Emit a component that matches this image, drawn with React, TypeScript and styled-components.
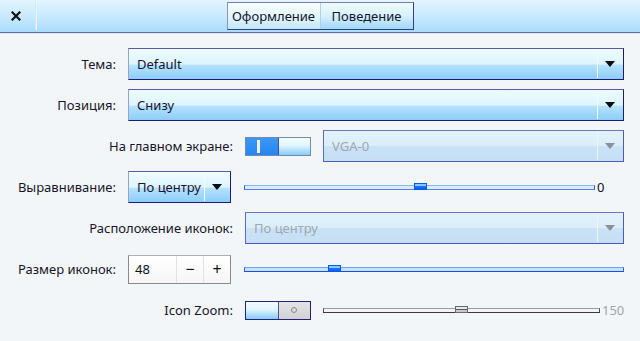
import styled, { createGlobalStyle } from "styled-components";

const GlobalStyle = createGlobalStyle`
  html, body {
    margin: 0;
    padding: 0;
    background: #f3f6f8;
  }
  body {
    font-family: "Noto Sans", "DejaVu Sans", sans-serif;
    font-size: 13px;
    color: #1c1a2e;
  }
`;

const Window = styled.div`
  width: 640px;
  height: 341px;
  display: flex;
  flex-direction: column;
  background: #f3f6f8;
`;

const Header = styled.div`
  height: 32px;
  display: grid;
  grid-template-columns: 1fr auto 1fr;
  align-items: center;
  background: linear-gradient(#e2f5ff, #c6e9ff 55%, #a9dbfb);
  border-bottom: 1px solid #6a6aa8;
  box-shadow: 0 1px 0 #dfe6ee;
`;

const HeaderLeft = styled.div`
  display: flex;
  align-items: center;
  height: 100%;
`;

const CloseButton = styled.div`
  width: 30px;
  display: flex;
  justify-content: center;
  padding-left: 1px;
`;

const HeaderSeparator = styled.div`
  width: 2px;
  height: 28px;
  margin-left: 4px;
  background: linear-gradient(90deg, #c8e2f2, #f4fbff);
`;

const TabBar = styled.div`
  display: flex;
  height: 26px;
  border: 1px solid #3a3a8a;
  border-top-color: #7a7ab0;
  border-left-color: #8a94c0;
`;

const Tab = styled.div<{ $active?: boolean }>`
  width: 92px;
  display: flex;
  align-items: center;
  justify-content: center;
  background: ${(p) =>
    p.$active
      ? "linear-gradient(#f6fdff, #e4f7ff 50%, #c2e6fb)"
      : "linear-gradient(#eefbff, #d6f1ff 50%, #9fd6fa)"};
  color: #14142a;
  & + & {
    border-left: 1px solid #b4cfe2;
  }
`;

const Form = styled.div`
  display: flex;
  flex-direction: column;
  gap: 9px;
  padding: 15px 16px 0 16px;
`;

const Row = styled.div`
  display: flex;
  align-items: center;
  height: 32px;
`;

const Label = styled.div<{ $wide?: boolean }>`
  width: ${(p) => (p.$wide ? "217px" : "100px")};
  margin-right: 12px;
  text-align: right;
  white-space: nowrap;
  color: #17152a;
`;

const Combo = styled.div<{ $disabled?: boolean; $width?: number }>`
  box-sizing: border-box;
  height: 32px;
  ${(p) => (p.$width ? `width: ${p.$width}px;` : "flex: 1;")}
  display: flex;
  align-items: center;
  border: 1px solid ${(p) => (p.$disabled ? "#4a5ac4" : "#1c1c78")};
  border-top-color: ${(p) => (p.$disabled ? "#6a76c8" : "#5a5aa2")};
  border-left-color: ${(p) => (p.$disabled ? "#5a6ac8" : "#9aa2c6")};
  background: ${(p) =>
    p.$disabled
      ? "linear-gradient(#e2f2fa, #daeef9 50%, #c9e2f6 52%, #c6dff5)"
      : "linear-gradient(#eefcff, #dcf5ff 50%, #b4e2ff 55%, #8ccdf8)"};
  color: ${(p) => (p.$disabled ? "#a0a8b0" : "#1a1030")};
  padding-left: 8px;
`;

const ComboText = styled.div`
  flex: 1;
  white-space: nowrap;
  overflow: hidden;
`;

const ComboArrow = styled.div<{ $disabled?: boolean }>`
  width: 24px;
  height: 28px;
  display: flex;
  align-items: center;
  justify-content: center;
  border-left: 1px solid ${(p) => (p.$disabled ? "#eef6fc" : "#f2fbff")};
  margin-right: 1px;
  &::after {
    content: "";
    width: 0;
    height: 0;
    border-left: 5px solid transparent;
    border-right: 5px solid transparent;
    border-top: 6px solid ${(p) => (p.$disabled ? "#8a9098" : "#0c0c14")};
  }
`;

const Toggle = styled.div<{ $on?: boolean }>`
  box-sizing: border-box;
  width: 66px;
  height: 19px;
  display: flex;
  border: 1px solid ${(p) => (p.$on ? "#7888a8" : "#22227a")};
  margin-right: 12px;
`;

const ToggleHalf = styled.div<{ $kind: "on" | "light" | "off" }>`
  flex: 1;
  display: flex;
  align-items: center;
  justify-content: center;
  background: ${(p) =>
    p.$kind === "on"
      ? "linear-gradient(#3c98f8, #2486f0)"
      : p.$kind === "light"
      ? "linear-gradient(#f2fcff, #dff5ff 45%, #86cbf8)"
      : "linear-gradient(#e4e4e6, #d2d2d4)"};
  & + & {
    border-left: 1px solid ${(p) => (p.$kind === "off" ? "#50508a" : "#5a7ab8")};
  }
`;

const ToggleBar = styled.div`
  width: 3px;
  height: 13px;
  background: #f4f0ff;
  margin-right: 6px;
`;

const ToggleCircle = styled.div`
  width: 4px;
  height: 4px;
  border: 1px solid #8a8a8e;
  border-radius: 50%;
`;

const SliderWrap = styled.div<{ $gap?: number }>`
  flex: 1;
  position: relative;
  height: 14px;
  margin-left: ${(p) => p.$gap ?? 0}px;
  display: flex;
  align-items: center;
`;

const Groove = styled.div<{ $tone: "blue" | "dark" | "grey" }>`
  flex: 1;
  box-sizing: border-box;
  height: 5px;
  border-top: 1px solid
    ${(p) => (p.$tone === "grey" ? "#9a9a9a" : p.$tone === "dark" ? "#6aa4f4" : "#8ab6f0")};
  border-bottom: 1px solid
    ${(p) => (p.$tone === "grey" ? "#3a3a3a" : p.$tone === "dark" ? "#1650e0" : "#4a86ec")};
  border-right: 1px solid ${(p) => (p.$tone === "grey" ? "#4a4a4a" : "#2a64e6")};
  border-left: 1px solid ${(p) => (p.$tone === "grey" ? "#4a4a4a" : "#2a64e6")};
  background: ${(p) => (p.$tone === "grey" ? "#f4f4f4" : p.$tone === "dark" ? "#c8e0fc" : "#dcebfc")};
`;

const Handle = styled.div<{ $pos: number; $tone: "blue" | "grey" }>`
  position: absolute;
  top: 50%;
  left: ${(p) => p.$pos}%;
  width: 13px;
  height: 7px;
  margin-top: -4px;
  box-sizing: border-box;
  border: 1px solid ${(p) => (p.$tone === "grey" ? "#6a6a6a" : "#0a58e8")};
  background: ${(p) =>
    p.$tone === "grey"
      ? "linear-gradient(#e8e8e8 40%, #5a5a5a 45%, #5a5a5a 60%, #c8c8c8 65%)"
      : "linear-gradient(#8cc4ff 35%, #1a78ff 40%, #0a60f0)"};
`;

const Value = styled.div<{ $width: number; $muted?: boolean }>`
  width: ${(p) => p.$width}px;
  padding-left: 2px;
  color: ${(p) => (p.$muted ? "#a0a4a8" : "#101018")};
  white-space: nowrap;
`;

const SpinBox = styled.div`
  box-sizing: border-box;
  width: 103px;
  height: 29px;
  display: flex;
  border: 1px solid #8a8a8a;
  border-top-color: #b0b0b0;
  background: linear-gradient(#ffffff, #f6f6f6);
`;

const SpinValue = styled.div`
  flex: 1;
  display: flex;
  align-items: center;
  padding-left: 6px;
  color: #101018;
`;

const SpinButton = styled.div`
  width: 26px;
  display: flex;
  align-items: center;
  justify-content: center;
  border-left: 1px solid #e2e2e2;
  font-size: 16px;
  color: #101010;
`;

interface ComboProps {
  text: string;
  disabled?: boolean;
  width?: number;
}

function ComboBox(props: ComboProps) {
  return (
    <Combo $disabled={props.disabled} $width={props.width}>
      <ComboText>{props.text}</ComboText>
      <ComboArrow $disabled={props.disabled} />
    </Combo>
  );
}

export default function App() {
  return (
    <Window>
      <GlobalStyle />
      <Header>
        <HeaderLeft>
          <CloseButton>
            <svg width="10" height="10" viewBox="0 0 10 10">
              <path d="M1.5 1.5 L8.5 8.5 M8.5 1.5 L1.5 8.5" stroke="#111" strokeWidth="2.2" strokeLinecap="square" />
            </svg>
          </CloseButton>
          <HeaderSeparator />
        </HeaderLeft>
        <TabBar>
          <Tab $active>Оформление</Tab>
          <Tab>Поведение</Tab>
        </TabBar>
        <div />
      </Header>

      <Form>
        <Row>
          <Label>Тема:</Label>
          <ComboBox text="Default" />
        </Row>
        <Row>
          <Label>Позиция:</Label>
          <ComboBox text="Снизу" />
        </Row>
        <Row>
          <Label $wide>На главном экране:</Label>
          <Toggle $on>
            <ToggleHalf $kind="on">
              <ToggleBar />
            </ToggleHalf>
            <ToggleHalf $kind="light" />
          </Toggle>
          <ComboBox text="VGA-0" disabled />
        </Row>
        <Row>
          <Label>Выравнивание:</Label>
          <ComboBox text="По центру" width={103} />
          <SliderWrap $gap={13}>
            <Groove $tone="blue" />
            <Handle $tone="blue" $pos={48.5} />
          </SliderWrap>
          <Value $width={27}>0</Value>
        </Row>
        <Row>
          <Label $wide>Расположение иконок:</Label>
          <ComboBox text="По центру" disabled />
        </Row>
        <Row>
          <Label>Размер иконок:</Label>
          <SpinBox>
            <SpinValue>48</SpinValue>
            <SpinButton>−</SpinButton>
            <SpinButton>+</SpinButton>
          </SpinBox>
          <SliderWrap $gap={13}>
            <Groove $tone="dark" />
            <Handle $tone="blue" $pos={22} />
          </SliderWrap>
        </Row>
        <Row>
          <Label $wide>Icon Zoom:</Label>
          <Toggle>
            <ToggleHalf $kind="light" />
            <ToggleHalf $kind="off">
              <ToggleCircle />
            </ToggleHalf>
          </Toggle>
          <SliderWrap>
            <Groove $tone="grey" />
            <Handle $tone="grey" $pos={47.5} />
          </SliderWrap>
          <Value $width={22} $muted>
            150
          </Value>
        </Row>
      </Form>
    </Window>
  );
}
